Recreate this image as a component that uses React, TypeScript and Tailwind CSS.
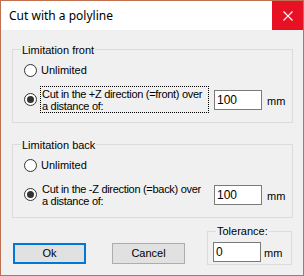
import React from "react"

function Radio({ checked }: { checked?: boolean }) {
  return (
    <div className="w-[13px] h-[13px] shrink-0 rounded-full border border-[#333333] bg-white flex items-center justify-center">
      {checked && <div className="w-[7px] h-[7px] rounded-full bg-[#333333]" />}
    </div>
  )
}

function Field({ value }: { value: string }) {
  return (
    <div className="w-[48px] h-[20px] shrink-0 border border-[#7a7a7a] bg-white pl-[2px] text-[12px] leading-[18px] text-black">
      {value}
    </div>
  )
}

function LimitGroup({ title, line1, focused }: { title: string; line1: string; focused?: boolean }) {
  return (
    <div className="relative w-[281px] h-[74px] border border-[#dcdcdc] pt-[14px] pl-[11px]">
      <span className="absolute -top-[6px] left-[8px] px-[1px] bg-[#f0f0f0] leading-[13px]">{title}</span>
      <div className="flex items-center h-[13px] gap-[4px] leading-[13px]">
        <Radio />
        <span>Unlimited</span>
      </div>
      <div className="mt-[9px] flex items-center h-[27px]">
        <Radio checked />
        <div
          className={
            focused
              ? "ml-[3px] w-[169px] h-[27px] border border-dotted border-black px-[1px] py-[1px] leading-[12px] tracking-[-0.3px] whitespace-nowrap"
              : "ml-[3px] w-[169px] h-[27px] border border-transparent px-[1px] py-[1px] leading-[12px] tracking-[-0.3px] whitespace-nowrap"
          }
        >
          {line1}
          <br />
          a distance of:
        </div>
        <div className="ml-[5px]">
          <Field value="100" />
        </div>
        <span className="ml-[5px] pt-[3px]">mm</span>
      </div>
    </div>
  )
}

export default function App() {
  return (
    <div className="w-[304px] h-[276px] border border-[#c07050] flex flex-col font-['Liberation_Sans',Arial,sans-serif] text-[11px] text-black">
      {/* title bar */}
      <div className="h-[29px] shrink-0 bg-white flex items-center justify-between">
        <span className="pl-[8px] font-['Noto_Sans',sans-serif] text-[12px]">Cut with a polyline</span>
        <div className="w-[31px] h-full bg-[#e81123] flex items-center justify-center">
          <svg width="10" height="10" viewBox="0 0 10 10">
            <path d="M0.5 0.5 L9.5 9.5 M9.5 0.5 L0.5 9.5" stroke="white" strokeWidth="1.1" />
          </svg>
        </div>
      </div>

      {/* body */}
      <div className="flex-1 bg-[#f0f0f0] pl-[11px]">
        <div className="mt-[19px]">
          <LimitGroup title="Limitation front" line1="Cut in the +Z direction (=front) over" focused />
        </div>
        <div className="mt-[21px]">
          <LimitGroup title="Limitation back" line1="Cut in the -Z direction (=back) over" />
        </div>

        <div className="mt-[13px] flex items-start">
          <button className="ml-[1px] mt-[12px] w-[73px] h-[21px] border-2 border-[#0078d7] bg-[#e1e1e1] leading-[17px]">
            Ok
          </button>
          <button className="ml-[26px] mt-[12px] w-[73px] h-[21px] border border-[#adadad] bg-[#e1e1e1] leading-[19px]">
            Cancel
          </button>
          <div className="relative ml-[22px] w-[85px] h-[34px] border border-[#dcdcdc] pt-[10px] pl-[5px]">
            <span className="absolute -top-[7px] left-[8px] px-[1px] bg-[#f0f0f0] leading-[13px]">Tolerance:</span>
            <div className="flex items-center">
              <Field value="0" />
              <span className="ml-[3px] pt-[3px]">mm</span>
            </div>
          </div>
        </div>
      </div>
    </div>
  )
}
